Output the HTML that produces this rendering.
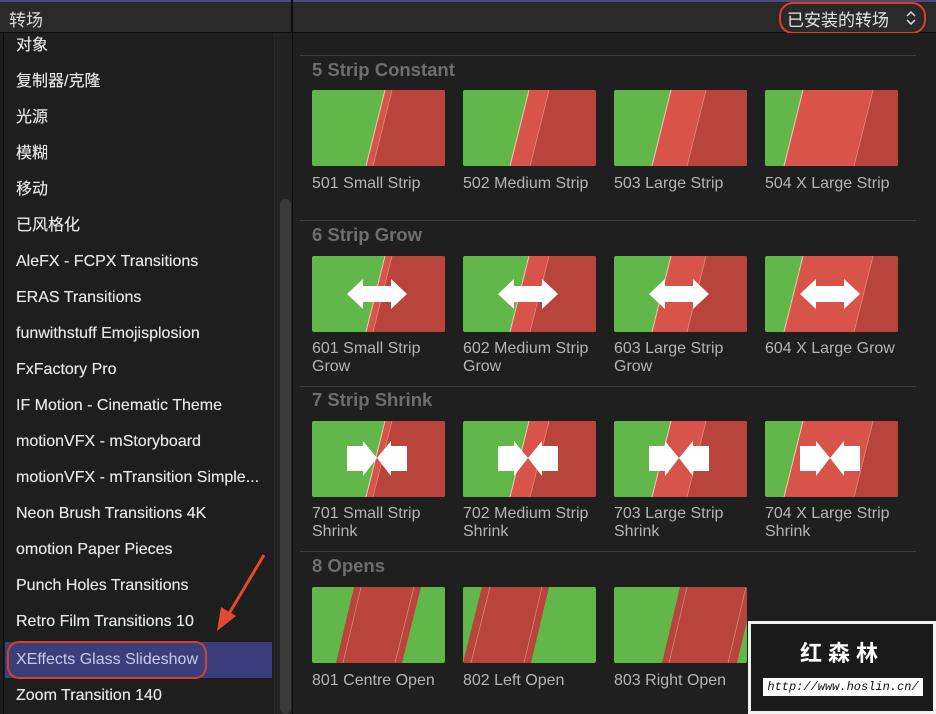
<!DOCTYPE html>
<html><head><meta charset="utf-8"><style>
*{margin:0;padding:0;box-sizing:border-box}
body{width:936px;height:714px;overflow:hidden;background:#1e1e1e;font-family:"Liberation Sans","Noto Sans CJK SC",sans-serif;position:relative}
.top{position:absolute;left:0;top:0;width:936px;height:33px;background:#2a2a2a;border-top:2px solid #4a4a78;border-bottom:1px solid #0d0d0d}
.top .t{position:absolute;left:9px;top:4px;font-size:17px;color:#dcdcdc}
.vdiv{position:absolute;left:291px;top:0;width:2px;height:714px;background:#0e0e0e}
.side{position:absolute;left:3px;top:33px;width:288px;height:681px;background:#1e1e1e;border-left:1px solid #0e0e0e}
.row{position:absolute;left:1px;width:267px;height:36px;color:#e6e6e6;font-size:16px;line-height:36px;padding-left:11px;white-space:nowrap;text-shadow:0 0 0.4px #e6e6e6}
.sel{background:#3a3f7c;color:#c8cbe8;text-shadow:none}
.track{position:absolute;left:270px;top:0;width:18px;height:681px;background:#222;border-left:1px solid #2a2a2a}
.thumb{position:absolute;left:276px;top:166px;width:11px;height:515px;border-radius:6px;background:#3a3a3a}
.main{position:absolute;left:293px;top:33px;width:643px;height:681px;background:#1f1f1f}
.hl{position:absolute;left:300px;width:616px;height:1px;background:#3c3c3c}
.hd{position:absolute;left:312px;font-size:18.5px;font-weight:bold;color:#6e6e6e}
.lb{position:absolute;font-size:16px;color:#b5b5b5;line-height:18px}
svg.th{position:absolute;width:133px;height:76px}
</style></head><body>
<svg width="0" height="0" style="position:absolute">
<defs>
<clipPath id="c"><rect width="133" height="76" rx="2"/></clipPath>
<g id="a"><polygon points="35,38 51,23 51,30 79,30 79,23 95,38 79,53 79,46 51,46 51,53" fill="#fff"/></g>
<g id="s"><polygon points="35,25 51,25 51,20 65,37 51,55 51,50 35,50" fill="#fff"/><polygon points="95,25 79,25 79,20 65,37 79,55 79,50 95,50" fill="#fff"/></g>
<g id="p1" clip-path="url(#c)"><rect width="133" height="76" fill="#62b74a"/><polygon points="73,0 133,0 133,76 54,76" fill="#b9443b"/><polygon points="73,0 80,0 61,76 54,76" fill="#d8534a"/><line x1="73" y1="0" x2="54" y2="76" stroke="#f0c9b0" stroke-width="1"/><line x1="80" y1="0" x2="61" y2="76" stroke="#e58a80" stroke-width="0.8"/></g>
<g id="p2" clip-path="url(#c)"><rect width="133" height="76" fill="#62b74a"/><polygon points="66,0 133,0 133,76 47,76" fill="#b9443b"/><polygon points="66,0 86,0 67,76 47,76" fill="#d8534a"/><line x1="66" y1="0" x2="47" y2="76" stroke="#f0c9b0"/><line x1="86" y1="0" x2="67" y2="76" stroke="#e58a80" stroke-width="0.8"/></g>
<g id="p3" clip-path="url(#c)"><rect width="133" height="76" fill="#62b74a"/><polygon points="57,0 133,0 133,76 38,76" fill="#b9443b"/><polygon points="57,0 92,0 73,76 38,76" fill="#d8534a"/><line x1="57" y1="0" x2="38" y2="76" stroke="#f0c9b0"/><line x1="92" y1="0" x2="73" y2="76" stroke="#e58a80" stroke-width="0.8"/></g>
<g id="p4" clip-path="url(#c)"><rect width="133" height="76" fill="#62b74a"/><polygon points="38,0 133,0 133,76 19,76" fill="#b9443b"/><polygon points="38,0 108,0 89,76 19,76" fill="#d8534a"/><line x1="38" y1="0" x2="19" y2="76" stroke="#f0c9b0"/><line x1="108" y1="0" x2="89" y2="76" stroke="#e58a80" stroke-width="0.8"/></g>
<g id="o1" clip-path="url(#c)"><rect width="133" height="76" fill="#62b74a"/><polygon points="42,0 109,0 90,76 24,76" fill="#b9443b"/><line x1="49" y1="0" x2="31" y2="76" stroke="#d88" stroke-width="0.7"/><line x1="102" y1="0" x2="83" y2="76" stroke="#d88" stroke-width="0.7"/></g>
<g id="o2" clip-path="url(#c)"><rect width="133" height="76" fill="#62b74a"/><polygon points="19,0 86,0 68,76 0,76" fill="#b9443b"/><line x1="27" y1="0" x2="8" y2="76" stroke="#d88" stroke-width="0.7"/><line x1="79" y1="0" x2="61" y2="76" stroke="#d88" stroke-width="0.7"/></g>
<g id="o3" clip-path="url(#c)"><rect width="133" height="76" fill="#62b74a"/><polygon points="66,0 141,0 123,76 48,76" fill="#b9443b"/><line x1="73" y1="0" x2="55" y2="76" stroke="#d88" stroke-width="0.7"/><line x1="132" y1="0" x2="114" y2="76" stroke="#d88" stroke-width="0.7"/></g>
</defs></svg>

<div class="top"><div class="t">转场</div>
<div style="position:absolute;left:787px;top:4px;font-size:17px;color:#e6e6e6">已安装的转场</div>
<svg style="position:absolute;left:905px;top:7px" width="12" height="18"><polyline points="2,7 6,3 10,7" fill="none" stroke="#ddd" stroke-width="1.5"/><polyline points="2,11 6,15 10,11" fill="none" stroke="#ddd" stroke-width="1.5"/></svg>
<div style="position:absolute;left:779px;top:0px;width:147px;height:32px;border:2.5px solid #d8402a;border-radius:14px"></div>
</div>
<div class="vdiv"></div>
<div class="side">
<div class="track"></div><div class="thumb"></div>
<div class="row" style="top:-5px">对象</div>
<div class="row" style="top:31px">复制器/克隆</div>
<div class="row" style="top:67px">光源</div>
<div class="row" style="top:103px">模糊</div>
<div class="row" style="top:139px">移动</div>
<div class="row" style="top:175px">已风格化</div>
<div class="row" style="top:211px">AleFX - FCPX Transitions</div>
<div class="row" style="top:247px">ERAS Transitions</div>
<div class="row" style="top:283px">funwithstuff Emojisplosion</div>
<div class="row" style="top:319px">FxFactory Pro</div>
<div class="row" style="top:355px">IF Motion - Cinematic Theme</div>
<div class="row" style="top:391px">motionVFX - mStoryboard</div>
<div class="row" style="top:427px">motionVFX - mTransition Simple...</div>
<div class="row" style="top:463px">Neon Brush Transitions 4K</div>
<div class="row" style="top:499px">omotion Paper Pieces</div>
<div class="row" style="top:535px">Punch Holes Transitions</div>
<div class="row" style="top:571px">Retro Film Transitions 10</div>
<div class="row sel" style="top:609px">XEffects Glass Slideshow</div>
<div class="row" style="top:645px">Zoom Transition 140</div>
</div>
<div style="position:absolute;left:7px;top:641px;width:200px;height:38px;border:2.5px solid #d8402a;border-radius:12px"></div>
<svg style="position:absolute;left:200px;top:545px" width="80" height="95"><line x1="64" y1="10" x2="27" y2="72" stroke="#e24a2e" stroke-width="3"/><polygon points="17,86 21,62 36,71" fill="#e24a2e"/></svg>

<div class="main"></div>
<div class="hl" style="top:55px"></div>
<div class="hd" style="top:59px">5 Strip Constant</div>
<svg class="th" style="left:312px;top:90px"><use href="#p1"/></svg>
<svg class="th" style="left:463px;top:90px"><use href="#p2"/></svg>
<svg class="th" style="left:614px;top:90px"><use href="#p3"/></svg>
<svg class="th" style="left:765px;top:90px"><use href="#p4"/></svg>
<div class="lb" style="left:312px;top:175px">501 Small Strip</div>
<div class="lb" style="left:463px;top:175px">502 Medium Strip</div>
<div class="lb" style="left:614px;top:175px">503 Large Strip</div>
<div class="lb" style="left:765px;top:175px">504 X Large Strip</div>

<div class="hl" style="top:220px"></div>
<div class="hd" style="top:224px">6 Strip Grow</div>
<svg class="th" style="left:312px;top:256px"><use href="#p1"/><use href="#a"/></svg>
<svg class="th" style="left:463px;top:256px"><use href="#p2"/><use href="#a"/></svg>
<svg class="th" style="left:614px;top:256px"><use href="#p3"/><use href="#a"/></svg>
<svg class="th" style="left:765px;top:256px"><use href="#p4"/><use href="#a"/></svg>
<div class="lb" style="left:312px;top:340px">601 Small Strip<br>Grow</div>
<div class="lb" style="left:463px;top:340px">602 Medium Strip<br>Grow</div>
<div class="lb" style="left:614px;top:340px">603 Large Strip<br>Grow</div>
<div class="lb" style="left:765px;top:340px">604 X Large Grow</div>

<div class="hl" style="top:386px"></div>
<div class="hd" style="top:389px">7 Strip Shrink</div>
<svg class="th" style="left:312px;top:421px"><use href="#p1"/><use href="#s"/></svg>
<svg class="th" style="left:463px;top:421px"><use href="#p2"/><use href="#s"/></svg>
<svg class="th" style="left:614px;top:421px"><use href="#p3"/><use href="#s"/></svg>
<svg class="th" style="left:765px;top:421px"><use href="#p4"/><use href="#s"/></svg>
<div class="lb" style="left:312px;top:505px">701 Small Strip<br>Shrink</div>
<div class="lb" style="left:463px;top:505px">702 Medium Strip<br>Shrink</div>
<div class="lb" style="left:614px;top:505px">703 Large Strip<br>Shrink</div>
<div class="lb" style="left:765px;top:505px">704 X Large Strip<br>Shrink</div>

<div class="hl" style="top:551px"></div>
<div class="hd" style="top:555px">8 Opens</div>
<svg class="th" style="left:312px;top:587px"><use href="#o1"/></svg>
<svg class="th" style="left:463px;top:587px"><use href="#o2"/></svg>
<svg class="th" style="left:614px;top:587px"><use href="#o3"/></svg>
<div class="lb" style="left:312px;top:672px">801 Centre Open</div>
<div class="lb" style="left:463px;top:672px">802 Left Open</div>
<div class="lb" style="left:614px;top:672px">803 Right Open</div>

<div style="position:absolute;left:748px;top:621px;width:188px;height:93px;background:#1a1a1a;border:3px solid #f2f2f2">
<div style="position:absolute;left:0;width:182px;top:12px;text-align:center;color:#fff;font-size:22px;font-weight:bold;letter-spacing:6px;font-family:'Noto Sans CJK SC',sans-serif">红森林</div>
<div style="position:absolute;left:12px;top:54px;width:160px;height:18px;background:#fff;color:#111;font-family:'Liberation Mono',monospace;font-style:italic;font-size:12px;line-height:18px;text-align:center;white-space:nowrap;overflow:hidden">http://www.hoslin.cn/</div>
</div>
</body></html>
